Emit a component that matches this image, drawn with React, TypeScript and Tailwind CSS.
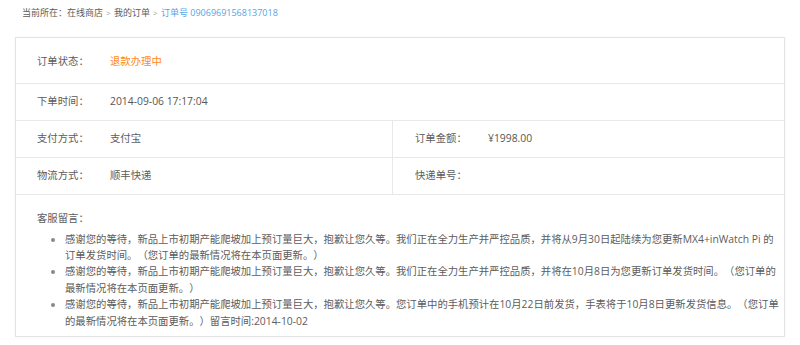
import React from 'react';

const OrderDetail: React.FC = () => {
  const messages = [
    '感谢您的等待，新品上市初期产能爬坡加上预订量巨大，抱歉让您久等。我们正在全力生产并严控品质，并将从9月30日起陆续为您更新MX4+inWatch Pi 的订单发货时间。（您订单的最新情况将在本页面更新。）',
    '感谢您的等待，新品上市初期产能爬坡加上预订量巨大，抱歉让您久等。我们正在全力生产并严控品质，并将在10月8日为您更新订单发货时间。（您订单的最新情况将在本页面更新。）',
    '感谢您的等待，新品上市初期产能爬坡加上预订量巨大，抱歉让您久等。您订单中的手机预计在10月22日前发货，手表将于10月8日更新发货信息。（您订单的最新情况将在本页面更新。）留言时间:2014-10-02',
  ];

  return (
    <div className="w-[800px] h-[345px] bg-white text-[10.35px] text-[#5c5c5c] [text-spacing-trim:space-all] font-['Open_Sans','Noto_Sans_CJK_SC',sans-serif]">
      <div className="h-[37px] pl-[22px] pt-[5px] leading-[16px] text-[9px] text-[#5c5c5c]">
        当前所在：在线商店 <span className="text-[7.5px] text-[#999] mx-[1px]">&gt;</span> 我的订单{' '}
        <span className="text-[7.5px] text-[#999] mx-[1px]">&gt;</span>{' '}
        <span className="text-[#55a5e6]">订单号 09069691568137018</span>
      </div>

      <div className="mx-[15px] w-[770px] h-[300px] border border-[#e3e3e3] shadow-[0_0_1px_rgba(0,0,0,0.08)]">
        <div className="h-[46px] pt-[3px] flex items-center border-b border-[#e8e8e8]">
          <span className="w-[94px] pl-[21px]">订单状态：</span>
          <span className="text-[#ff8a1c]">退款办理中</span>
        </div>
        <div className="h-[37px] flex items-center border-b border-[#e8e8e8]">
          <span className="w-[94px] pl-[21px]">下单时间：</span>
          <span className="text-[#555]">2014-09-06 17:17:04</span>
        </div>
        <div className="h-[37px] flex border-b border-[#e8e8e8]">
          <div className="w-[377px] flex items-center border-r border-[#e8e8e8]">
            <span className="w-[94px] pl-[21px]">支付方式：</span>
            <span>支付宝</span>
          </div>
          <div className="flex-1 flex items-center">
            <span className="w-[95px] pl-[22px]">订单金额：</span>
            <span className="text-[#555]">¥1998.00</span>
          </div>
        </div>
        <div className="h-[37px] flex border-b border-[#e8e8e8]">
          <div className="w-[377px] flex items-center border-r border-[#e8e8e8]">
            <span className="w-[94px] pl-[21px]">物流方式：</span>
            <span>顺丰快递</span>
          </div>
          <div className="flex-1 flex items-center">
            <span className="w-[95px] pl-[22px]">快递单号：</span>
          </div>
        </div>
        <div className="pl-[21px] pr-[3px] pt-[15px]">
          <div className="leading-[16.5px]">客服留言：</div>
          <ul className="mt-[4px] pl-[28px] list-disc leading-[16.4px]">
            {messages.map((m, i) => (
              <li key={i} className="marker:text-[#888]">
                {m}
              </li>
            ))}
          </ul>
        </div>
      </div>
    </div>
  );
};

export default OrderDetail;
